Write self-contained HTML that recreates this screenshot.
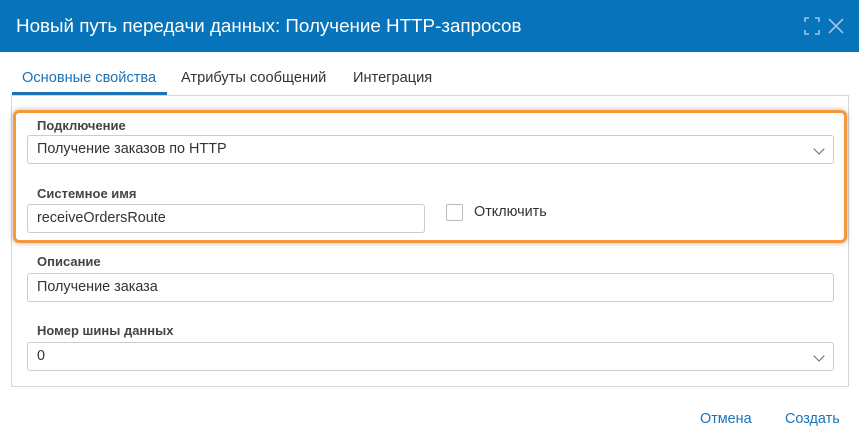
<!DOCTYPE html>
<html><head><meta charset="utf-8"><style>
*{box-sizing:border-box;margin:0;padding:0}
body{width:859px;height:443px;background:#fff;font-family:"Liberation Sans","DejaVu Sans",sans-serif;position:relative;overflow:hidden;color:#333}
.hdr{position:absolute;left:0;top:0;width:859px;height:52px;background:#0673bb;color:#fff;font-size:18.8px;line-height:52px;padding-left:16px}
.ab{position:absolute}
.tab{position:absolute;top:70px;font-size:14.6px;color:#333}
.lbl{position:absolute;left:37px;font-size:13px;font-weight:bold;color:#444}
.inp{position:absolute;left:27px;height:29px;border:1px solid #ccc;border-radius:3px;font-size:14.4px;line-height:27px;padding-left:9px;color:#333;background:#fff}
.chev{position:absolute;right:10px;top:9px;width:8px;height:8px;border-right:1.3px solid #666;border-bottom:1.3px solid #666;transform:rotate(45deg)}
.btn{position:absolute;top:411px;font-size:14.4px;color:#1a73b8}
</style></head><body>
<div class="hdr">Новый путь передачи данных: Получение HTTP-запросов</div>
<svg class="ab" style="left:802px;top:15px" width="46" height="22" viewBox="0 0 46 22">
<g fill="none" stroke="#9cc3e4" stroke-width="1.6">
<path d="M3 7V3h4M13 3h4v4M17 15v4h-4M7 19H3v-4"/>
<path d="M27 4l14 14M41 4L27 18"/></g></svg>
<div class="tab" style="left:22px;color:#1a73b8">Основные свойства</div>
<div class="ab" style="left:12px;top:92px;width:155px;height:3px;background:#1a73b8"></div>
<div class="tab" style="left:181px">Атрибуты сообщений</div>
<div class="tab" style="left:353px">Интеграция</div>
<div class="ab" style="left:11px;top:95px;width:838px;height:292px;border:1px solid #d6d6d6;border-top:none"></div>
<div class="ab" style="left:11px;top:95px;width:838px;height:1px;background:#d6d6d6"></div>
<div class="ab" style="left:13px;top:110px;width:834px;height:133px;border:3px solid #f7963a;border-radius:6px;box-shadow:0 0 6px rgba(0,0,0,.3)"></div>
<div class="lbl" style="top:118px">Подключение</div>
<div class="inp" style="top:135px;width:807px">Получение заказов по HTTP<div class="chev"></div></div>
<div class="lbl" style="top:186px">Системное имя</div>
<div class="inp" style="top:204px;width:398px">receiveOrdersRoute</div>
<div class="ab" style="left:446px;top:204px;width:17px;height:17px;border:1px solid #bbb;border-radius:2px"></div>
<div class="ab" style="left:474px;top:204px;font-size:14.4px">Отключить</div>
<div class="lbl" style="top:254px">Описание</div>
<div class="inp" style="top:273px;width:807px">Получение заказа</div>
<div class="lbl" style="top:323px">Номер шины данных</div>
<div class="inp" style="top:342px;width:807px">0<div class="chev"></div></div>
<div class="btn" style="left:700px">Отмена</div>
<div class="btn" style="left:785px">Создать</div>
</body></html>
